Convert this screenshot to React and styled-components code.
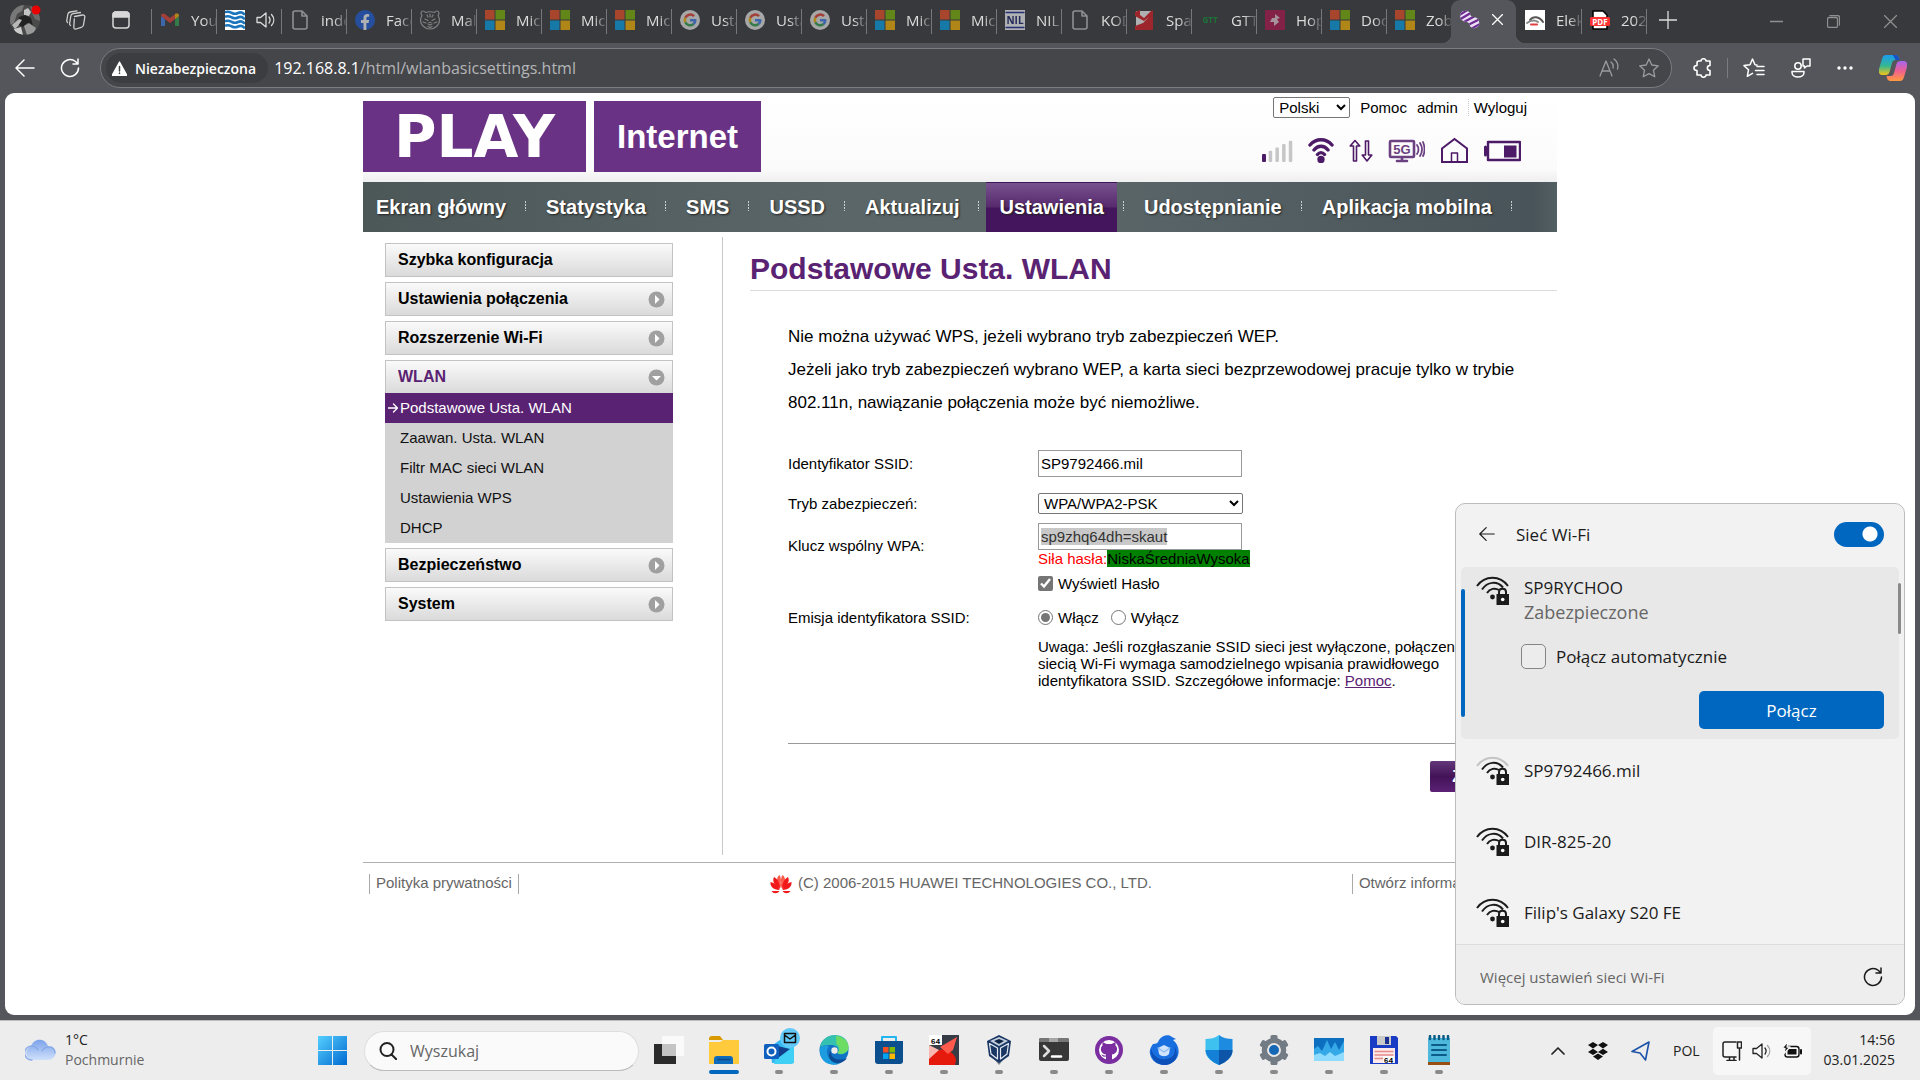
import React, { useEffect, useRef } from "react";
import styled, { createGlobalStyle, css } from "styled-components";

const UI = `"Open Sans", "Noto Sans", sans-serif`;
const WEB = `"Liberation Sans", Arial, sans-serif`;
const PURPLE = "#5a2272";
const ACCENT = "#0067c0";

const Global = createGlobalStyle`
  *, *::before, *::after { box-sizing: border-box; }
  body { margin: 0; background: #55565b; font-family: ${WEB}; font-size: 15px; color: #000; }
  button { font: inherit; color: inherit; border: 0; padding: 0; background: none; }
  svg { display: block; flex: none; }
`;

/* ---------- shell ---------- */
const Desktop = styled.div`
  display: flex;
  flex-direction: column;
  min-height: 100vh;
  overflow: hidden;
`;
const Browser = styled.div`
  flex: 1;
  display: flex;
  flex-direction: column;
  background: #55565b;
  font-family: ${UI};
`;
const TabStrip = styled.div`
  display: flex;
  align-items: flex-start;
  height: 43px;
  background: #38393c;
  color: #dcdcdc;
`;
const StripTools = styled.div`
  display: flex;
  flex: none;
  align-items: center;
  gap: 26px;
  width: 151px;
  height: 40px;
  padding-left: 10px;
`;
const Tab = styled.button`
  display: flex;
  flex: none;
  align-items: center;
  gap: 11px;
  width: 65px;
  height: 25px;
  margin-top: 9px;
  padding: 0 0 4px 8px;
  border-left: 1px solid ${(p) => (p.$plain ? "transparent" : "#76777a")};
  overflow: hidden;
`;
const TabText = styled.span`
  flex: 1;
  min-width: 0;
  overflow: hidden;
  white-space: nowrap;
  text-align: left;
  font-size: 15px;
  line-height: 20px;
  mask-image: linear-gradient(90deg, #000 50%, transparent 110%);
`;
const Favicon = styled.span`
  flex: none;
  width: 20px;
  height: 20px;
  opacity: ${(p) => (p.$asleep ? 0.6 : 1)};
`;
const ActiveTab = styled.button`
  position: relative;
  display: flex;
  flex: none;
  align-items: center;
  gap: 12px;
  width: 65px;
  height: 43px;
  padding: 0 0 4px 9px;
  border-radius: 9px 9px 0 0;
  background: #55565b;
  &::before, &::after {
    content: "";
    position: absolute;
    bottom: 0;
    width: 9px;
    height: 9px;
  }
  &::before { left: -9px; background: radial-gradient(circle at 0 0, #38393c 9px, #55565b 9px); }
  &::after { right: -9px; background: radial-gradient(circle at 9px 0, #38393c 9px, #55565b 9px); }
`;
const NewTab = styled.button`
  height: 25px;
  margin-top: 9px;
  padding: 0 0 4px 12px;
  border-left: 1px solid #76777a;
`;
const WindowButtons = styled.div`
  display: flex;
  gap: 44px;
  margin-left: auto;
  padding: 15px 23px 0 0;
`;
const Toolbar = styled.div`
  display: flex;
  align-items: center;
  height: 50px;
  padding: 0 13px 0 15px;
  color: #fff;
`;
const NavButtons = styled.div`
  display: flex;
  gap: 25px;
  width: 85px;
`;
const Omnibox = styled.div`
  display: flex;
  flex: 1;
  align-items: center;
  height: 40px;
  padding: 0 12px 0 5px;
  border: 1px solid #7b7c80;
  border-radius: 20px;
  background: #45464a;
`;
const SecurityChip = styled.button`
  display: flex;
  align-items: center;
  gap: 8px;
  height: 30px;
  padding: 0 12px 0 6px;
  border-radius: 15px;
  background: #3c3d41;
  font-size: 14px;
  font-weight: 600;
`;
const Address = styled.div`
  flex: 1;
  margin-left: 6px;
  font-size: 16px;
  color: #b4b5b7;
  & b { font-weight: 400; color: #fff; }
`;
const OmniActions = styled.div`
  display: flex;
  gap: 20px;
  color: #9b9c9f;
`;
const ToolActions = styled.div`
  display: flex;
  align-items: center;
  gap: 26px;
  padding-left: 21px;
`;
const ToolDivider = styled.span`
  width: 1px;
  height: 20px;
  margin: 0 -11px;
  background: #7b7c80;
`;
const Viewport = styled.main`
  flex: 1;
  margin: 0 5px 5px;
  border-radius: 9px;
  background: #fff;
  font-family: ${WEB};
`;

/* ---------- router page ---------- */
const Page = styled.div`
  max-width: 1194px;
  margin: 0 auto;
`;
const Header = styled.header`
  display: flex;
  justify-content: space-between;
  height: 89px;
  padding-right: 30px;
  background: linear-gradient(#fff, #fbfbfb 85%, #efefef);
`;
const Brand = styled.div`
  display: flex;
  gap: 8px;
  padding-top: 8px;
`;
const BrandBox = styled.div`
  display: flex;
  align-items: center;
  justify-content: center;
  width: ${(p) => (p.$wide ? 223 : 167)}px;
  height: 71px;
  background: #6a3285;
  color: #fff;
  font: ${(p) => (p.$wide ? `700 58px "DejaVu Sans", sans-serif` : `700 33px ${WEB}`)};
`;
const HeaderSide = styled.div`
  display: flex;
  flex-direction: column;
  align-items: flex-end;
  gap: 19px;
  padding-top: 4px;
`;
const UserLinks = styled.div`
  display: flex;
  align-items: center;
  gap: 10px;
  height: 21px;
  & a { color: #000; text-decoration: none; }
  & a:last-child { padding-left: 5px; border-left: 1px dotted #ccc; }
`;
const Select = styled.select`
  width: ${(p) => p.$width}px;
  height: 21px;
  padding: 0 0 0 1px;
  border: 1px solid #767676;
  border-radius: 2px;
  background: #fff;
  color: #000;
  font: 15px ${WEB};
`;
const StatusIcons = styled.div`
  display: flex;
  align-items: center;
  gap: 15px;
  padding-right: 6px;
`;
const MainNav = styled.nav`
  display: flex;
  height: 50px;
  background: linear-gradient(90deg, #4c5758, #5a6668 40%, #5a6668 60%, #49545a 98%, #536061);
`;
const NavLink = styled.a`
  display: flex;
  align-items: center;
  padding: 0 13px;
  color: #fff;
  font-size: 20px;
  font-weight: 700;
  text-decoration: none;
  text-shadow: 1px 1px 2px #222;
  ${(p) => p.$active && css`
    background: linear-gradient(#79548f, #57296d 50%, #44155c 52%, #44155c);
    box-shadow: inset 0 1px #3f1458;
  `}
`;
const NavDots = styled.span`
  width: 14px;
  height: 10px;
  margin-top: 19px;
  padding-left: 6px;
  &::before {
    content: "";
    display: block;
    width: 1px;
    height: 10px;
    background: repeating-linear-gradient(#c8cdcd 0 2px, transparent 2px 3px);
  }
`;
const Columns = styled.div`
  display: flex;
  min-height: 618px;
  margin-top: 5px;
`;
const Sidebar = styled.aside`
  flex: none;
  width: 360px;
  padding: 6px 49px 0 22px;
  border-right: 1px solid #c8c8c8;
`;
const Menu = styled.ul`
  display: flex;
  flex-direction: column;
  gap: 5px;
  margin: 0;
  padding: 0;
  list-style: none;
`;
const MenuLink = styled.a`
  display: flex;
  align-items: center;
  justify-content: space-between;
  height: 34px;
  padding: 0 7px 0 12px;
  border: 1px solid #c3c3c3;
  background: linear-gradient(#fafafa, #dadada);
  color: ${(p) => (p.$open ? PURPLE : "#000")};
  font-size: 16px;
  font-weight: 700;
  text-decoration: none;
`;
const SubMenu = styled.ul`
  margin: -1px 0 0;
  padding: 0;
  background: #d2d2d2;
  list-style: none;
`;
const SubLink = styled.a`
  display: flex;
  align-items: center;
  height: 30px;
  padding: 0 0 1px ${(p) => (p.$active ? 3 : 15)}px;
  gap: 2px;
  background: ${(p) => (p.$active ? PURPLE : "none")};
  color: ${(p) => (p.$active ? "#fff" : "#111")};
  text-decoration: none;
`;
const Content = styled.section`
  flex: 1;
  min-width: 0;
  margin-left: 27px;
`;
const Title = styled.h1`
  margin: 0;
  padding: 15px 0 4px;
  border-bottom: 1px solid #ddd;
  color: ${PURPLE};
  font-size: 30px;
  line-height: 34px;
`;
const Body = styled.div`
  padding: 29px 0 0 38px;
`;
const Notice = styled.p`
  margin: 0;
  font-size: 17px;
  line-height: 33px;
`;
const Form = styled.form`
  margin-top: 31px;
  line-height: 17px;
`;
const Row = styled.div`
  display: grid;
  grid-template-columns: 250px 1fr;
  align-items: ${(p) => (p.$top ? "start" : "center")};
  margin-bottom: ${(p) => p.$after}px;
`;
const RowLabel = styled.label`
  padding-top: ${(p) => (p.$drop ? 14 : 0)}px;
`;
const Stack = styled.div`
  display: flex;
  flex-direction: column;
  align-items: flex-start;
`;
const Choices = styled.div`
  display: flex;
  gap: 12px;
`;
const TextBox = styled.input`
  display: block;
  width: 204px;
  height: 27px;
  padding: 0 2px;
  border: 1px solid #999;
  border-radius: 0;
  outline: 0;
  font: 15px/25px ${WEB};
  &::selection { background: #c8c8c8; color: #333; }
`;
const Strength = styled.div`
  color: red;
  & span { display: inline-block; background: green; color: #000; }
`;
const Choice = styled.label`
  display: flex;
  align-items: center;
  gap: 5px;
  height: 17px;
  margin-top: ${(p) => (p.$drop ? 8 : 0)}px;
`;
const Tick = styled.input`
  width: 15px;
  height: 15px;
  margin: 0;
  accent-color: #757575;
`;
const Hint = styled.p`
  width: 450px;
  margin: 12px 0 0 250px;
  & a { color: ${PURPLE}; }
`;
const Actions = styled.div`
  display: flex;
  justify-content: flex-end;
  margin-top: 54px;
  padding: 17px 17px 0 0;
  border-top: 1px solid #999;
`;
const Apply = styled.button`
  height: 31px;
  padding: 0 22px;
  border-radius: 2px;
  background: linear-gradient(#64387a, #431358 50%, #5c2175);
  color: #fff;
  font-size: 16px;
  font-weight: 700;
`;
const PageFooter = styled.footer`
  display: grid;
  grid-template-columns: 401px 1fr auto;
  justify-items: start;
  margin-top: 7px;
  padding: 11px 6px 0;
  border-top: 1px solid #b0b0b0;
  color: #666;
  line-height: 18px;
`;
const FootLink = styled.a`
  padding: 0 6px;
  border: solid #aaa;
  border-width: 0 1px;
  color: inherit;
  text-decoration: none;
`;
const Copyright = styled.span`
  display: flex;
  gap: 6px;
`;

/* ---------- Wi-Fi flyout ---------- */
const Flyout = styled.section`
  position: fixed;
  right: 15px;
  bottom: 75px;
  width: 450px;
  border: 1px solid #bcbcbc;
  border-radius: 10px;
  background: #f2f2f2;
  color: #1b1b1b;
  font-family: ${UI};
  font-size: 17px;
  overflow: hidden;
`;
const FlyHead = styled.header`
  display: flex;
  align-items: center;
  gap: 21px;
  height: 62px;
  padding: 0 20px 2px 23px;
  & h2 { flex: 1; margin: 0; font-size: 17px; font-weight: 400; }
`;
const Switch = styled.input`
  appearance: none;
  width: 50px;
  height: 25px;
  margin: 0;
  border-radius: 13px;
  background: radial-gradient(circle at 36px 12px, #fff 7px, ${ACCENT} 8px);
`;
const NetList = styled.div`
  position: relative;
  padding: 1px 5px 0;
`;
const ScrollThumb = styled.span`
  position: absolute;
  top: 17px;
  right: 3px;
  width: 3px;
  height: 51px;
  border-radius: 2px;
  background: #8a8a8a;
`;
const Selected = styled.div`
  display: flex;
  height: 172px;
  border-radius: 5px;
  background: #e8e8e8;
`;
const SelectBar = styled.span`
  width: 4px;
  margin: 22px 11px 22px 0;
  border-radius: 2px;
  background: ${ACCENT};
`;
const SelectedBody = styled.div`
  display: flex;
  flex: 1;
  flex-direction: column;
  padding: 9px 15px 10px 0;
`;
const NetName = styled.div`
  display: flex;
  gap: 15px;
  line-height: 24px;
  & small { display: block; color: #666; font-size: 18px; }
`;
const Auto = styled.label`
  display: flex;
  align-items: center;
  gap: 10px;
  height: 25px;
  margin: 20px 0 0 45px;
`;
const AutoBox = styled.input`
  appearance: none;
  width: 25px;
  height: 25px;
  margin: 0;
  border: 1px solid #858585;
  border-radius: 5px;
  background: #ececec;
`;
const Connect = styled.button`
  align-self: flex-end;
  width: 185px;
  height: 38px;
  margin-top: auto;
  border-radius: 5px;
  background: ${ACCENT};
  color: #fff;
`;
const Network = styled.button`
  display: flex;
  align-items: center;
  gap: 15px;
  width: 100%;
  height: 71px;
  padding: 0 0 8px 15px;
`;
const FlyFoot = styled.footer`
  display: flex;
  align-items: center;
  justify-content: space-between;
  height: 60px;
  margin-top: -8px;
  position: relative;
  padding: 4px 21px 0 24px;
  border-top: 1px solid #dcdcdc;
  background: #eee;
  & a { color: #666; font-size: 15px; text-decoration: none; }
`;

/* ---------- taskbar ---------- */
const Taskbar = styled.footer`
  display: flex;
  align-items: center;
  height: 60px;
  padding: 0 25px;
  border-top: 1px solid #bbb;
  background: #ededed;
  color: #222;
  font-family: ${UI};
  font-size: 14px;
  line-height: 20px;
`;
const Weather = styled.button`
  display: flex;
  align-items: center;
  gap: 9px;
  width: 293px;
  padding-bottom: 2px;
  text-align: left;
  & span { display: block; color: #666; }
`;
const SearchBox = styled.label`
  display: flex;
  align-items: center;
  gap: 13px;
  width: 275px;
  height: 40px;
  margin: 0 2px 0 17px;
  padding: 0 14px;
  border: 1px solid #dedede;
  border-bottom-color: #bbb;
  border-radius: 20px;
  background: #fafafa;
  & input {
    width: 200px;
    padding: 0;
    border: 0;
    outline: 0;
    background: none;
    font: 16px ${UI};
  }
  & input::placeholder { color: #666; opacity: 1; }
`;
const Apps = styled.div`
  display: flex;
`;
const AppButton = styled.button`
  display: flex;
  flex-direction: column;
  align-items: center;
  width: 55px;
  height: 60px;
  padding-top: 14px;
  &::after {
    content: "";
    width: ${(p) => (p.$state === "active" ? 30 : 8)}px;
    height: 4px;
    margin-top: 5px;
    border-radius: 2px;
    background: ${(p) => (p.$state === "active" ? ACCENT : p.$state === "idle" ? "transparent" : "#8a8a8a")};
  }
`;
const Tray = styled.div`
  display: flex;
  align-items: center;
  gap: 23px;
  margin-left: auto;
`;
const TrayGroup = styled.button`
  display: flex;
  align-items: center;
  gap: 10px;
  height: 48px;
  margin: 0 -10px;
  padding: 0 9px;
  border-radius: 5px;
  background: #f7f7f7;
`;
const Clock = styled.time`
  padding-bottom: 2px;
  text-align: right;
  & span { display: block; }
`;

/* ---------- drawings ---------- */
const Icon = ({ w = 20, h, vb, children, ...rest }) => (
  <svg width={w} height={h || w} viewBox={vb || `0 0 ${w} ${h || w}`} fill="none" stroke="currentColor" strokeWidth="1.3" strokeLinecap="round" strokeLinejoin="round" aria-hidden="true" {...rest}>
    {children}
  </svg>
);
const F = ({ children }) => <Icon stroke="none">{children}</Icon>;

const favicons = {
  gmail: <F><path d="M1 16V6l4 3v7z" fill="#4285f4" /><path d="M15 9l4-3v10h-4z" fill="#34a853" /><path d="M1 6c0-3 2.500-3 4-2l5 4 5-4c1.500-1 4-1 4 2l-9 7z" fill="#ea4335" /><path d="M15 4c2-1 4-.5 4 2l-4 3z" fill="#fbbc04" /></F>,
  waves: <Icon strokeWidth="2.600" stroke="#1b75bc"><rect width="20" height="20" fill="#fff" stroke="none" />{[4, 8.500, 13, 17.500].map((y) => <path key={y} d={`M1 ${y - 2}c3-1 4 0 6 1s4 1 6 0 4-1 6 1`} />)}</Icon>,
  doc: <Icon stroke="#c8c8c8" strokeWidth="1.600"><path d="M5 1h7l5 5v11a2 2 0 0 1-2 2H5a2 2 0 0 1-2-2V3a2 2 0 0 1 2-2zM12 1v5h5" /></Icon>,
  facebook: <F><circle cx="10" cy="10" r="10" fill="#1a5fe0" /><path d="M8.500 20v-7H6v-3h2.500V8c0-3 1.700-4 4-4l1.700.2v2.600h-1.400c-1.100 0-1.400.7-1.400 1.500V10h2.700l-.5 3h-2.200v7z" fill="#fff" /></F>,
  tiger: <Icon stroke="#b0b0b0" strokeWidth="1.200"><path d="M3 1c-2 0-2.500 3-1 4.500C0 9 0 13 3 16c4 4 10 4 14 0 3-3 3-7 1-10.500C19.500 4 19 1 17 1c-1 0-2 .7-2.500 1.500-3-1-6-1-9 0C5 1.700 4 1 3 1zM5 9l3 1.500M15 9l-3 1.500M8 14l2 1 2-1M10 4v3M7 5l1 2M13 5l-1 2M3 12l3 1M17 12l-3 1M8 16.500l2 1 2-1M9 12.500h2" /></Icon>,
  ms: <F><path fill="#f25022" d="M0 0h9.500v9.500H0z" /><path fill="#7fba00" d="M10.500 0H20v9.500h-9.500z" /><path fill="#00a4ef" d="M0 10.500h9.500V20H0z" /><path fill="#ffb900" d="M10.500 10.500H20V20h-9.500z" /></F>,
  google: <Icon strokeWidth="2.600" strokeLinecap="butt"><circle cx="10" cy="10" r="10" fill="#f1f1f1" stroke="none" /><path d="M14 6.200A5.300 5.300 0 0 0 5.300 7.800" stroke="#ea4335" /><path d="M5.300 7.800a5.300 5.300 0 0 0 0 4.500" stroke="#fbbc05" /><path d="M5.300 12.300A5.300 5.300 0 0 0 13.500 14" stroke="#34a853" /><path d="M13.500 14a5 5 0 0 0 1.800-3.800H10" stroke="#4285f4" /></Icon>,
  nil: <Icon stroke="#1f2a9c"><rect width="20" height="20" fill="#fff" stroke="none" /><path d="M1 2.500h18M1 17.500h18" /><text x="10" y="14" fontSize="10" fontWeight="700" textAnchor="middle" fill="#16206e" stroke="none" fontFamily="Open Sans">NIL</text></Icon>,
  mail: <F><path fill="#fff" d="M1 1h17v18H1z" /><path fill="#e01b22" d="M0 2l5-2v5l4 3 7-7 2-1v20H0v-4l8-3 6-6-5 4-9-5z" /></F>,
  gtt: <F><text x="10" y="13" fontSize="8" fontWeight="700" textAnchor="middle" fill="#0c9a35" fontFamily="Open Sans">GTT</text></F>,
  hop: <F><rect width="20" height="20" rx="1" fill="#b5124f" /><path fill="#fff" d="M10 4l5 4-3 1 2 3-5 4v-4l-4 0 2-4 3 0z" opacity=".8" /></F>,
  swirl: (
    <Icon stroke="none">
      <clipPath id="swirl"><path d="M1 3c2-3 7-3 9 0 0 2 1 4 3 4 5 0 7 4 6 8-2 4-7 4-9 1 0-2-1-3-3-4C1 12-1 7 1 3z" /></clipPath>
      <g clipPath="url(#swirl)"><path d="M0 0h20v20H0z" fill="#ece0f4" /><path d="M-2 6L9-1M-1 10L14 1M2 13L17 5M6 16l14-7M9 20l13-7" stroke="#6d2b93" strokeWidth="2.200" /></g>
    </Icon>
  ),
  elek: <Icon strokeWidth="2"><rect width="20" height="20" fill="#fff" stroke="none" /><path stroke="#555" d="M5 10c3-4 9-4 13 2" /><path stroke="#888" d="M2 13c4-3 8-3 11-1" /><path stroke="#e04040" d="M6 14.500h6" /></Icon>,
  pdf: <F><path fill="#fff" stroke="#000" strokeWidth="1.500" d="M3 1h10l4 4v14H3z" /><rect y="7" width="20" height="9" rx="1.500" fill="#f33" /><text x="10" y="14.500" fontSize="8" fontWeight="700" textAnchor="middle" fill="#fff" fontFamily="Open Sans">PDF</text></F>,
};
const Speaker = ({ soft }) => (
  <Icon><path d="M1 7.500h3.500L10 3v14l-5.500-4.500H1zM13 7c1.300 1.800 1.300 4.200 0 6" /><path d="M15.500 4.500c3 3.300 3 7.700 0 11" opacity={soft ? 0.4 : 1} /></Icon>
);
const Back = ({ w = 20 }) => <Icon w={w} vb="0 0 20 20" strokeWidth="1.500"><path d="M19 10H1M9 2L1 10l8 8" /></Icon>;
const Reload = () => <Icon w={20} strokeWidth="1.500"><path d="M18.500 10A8.500 8.500 0 1 1 15.500 3.500L17 5M18 1v5h-5" /></Icon>;
const WifiLock = ({ weak }) => (
  <Icon w={33} h={29} strokeWidth="2" strokeLinecap="butt">
    <path d="M1 10C9-1 24-1 32 10" stroke={weak ? "#c4c4c4" : undefined} />
    <path d="M6 13.500c5.500-8 15-9 21-2M11 17c3-4.500 8-5.500 12-3" />
    <circle cx="16.500" cy="21" r="2.400" fill="currentColor" stroke="none" />
    <path d="M23 18v-2c0-4.500 7-4.500 7 0v2" />
    <path d="M20.500 18H33v11H20.500z" fill="currentColor" stroke="none" />
    <circle cx="26.700" cy="23.500" r="1.800" fill="#fff" stroke="none" />
  </Icon>
);
const MenuArrow = ({ open }) => (
  <Icon w={17} stroke="none"><circle cx="8.500" cy="8.500" r="8" fill="#a0a0a0" /><path d={open ? "M4 7h9l-4.500 4.500z" : "M7 4v9l4.500-4.500z"} fill="#fff" /></Icon>
);

const tabs = [
  ["gmail", "You", 1], ["waves"], ["doc", "inde", 1], ["facebook", "Face", 1], ["tiger", "Mal", 1],
  ["ms", "Micr", 1], ["ms", "Micr", 1], ["ms", "Micr", 1], ["google", "Usta", 1], ["google", "Usta", 1],
  ["google", "Usta", 1], ["ms", "Micr", 1], ["ms", "Micr", 1], ["nil", "NIL", 1], ["doc", "KOD", 1],
  ["mail", "Spa", 1], ["gtt", "GTT", 1], ["hop", "Hop", 1], ["ms", "Doc", 1], ["ms", "Zob", 1],
];
const BrowserTab = ({ data: [icon, text, asleep], plain }) => (
  <Tab $plain={plain}>
    <Favicon $asleep={asleep}>{favicons[icon]}</Favicon>
    {text ? <TabText>{text}</TabText> : <Speaker />}
  </Tab>
);

const StatusBar = () => (
  <StatusIcons>
    <Icon w={31} h={26} stroke="none"><rect y="17" width="4" height="8" rx="1" fill="#4d1a68" />{[1, 2, 3, 4].map((i) => <rect key={i} x={i * 6.700} y={17 - i * 3.300} width="3.500" height={8 + i * 3.300} rx="1" fill="#c6c6c6" />)}</Icon>
    <Icon w={26} stroke="#4d1a68" strokeWidth="3.400"><path d="M2 8c6-7 16-7 22 0M6 13c4-5 10-5 14 0M9.500 17.500c2-2.500 5-2.500 7 0" /><circle cx="13" cy="22.500" r="2" fill="#4d1a68" /></Icon>
    <Icon w={24} h={26} stroke="#4d1a68" strokeWidth="1.600"><path d="M4.500 24V9H1.200L6 3.500 10.800 9H7.500v15zM16.500 4v14h-3.300l4.800 6 4.800-6h-3.300V4z" /></Icon>
    <Icon w={37} h={26} stroke="#6b4182" strokeWidth="2.600"><rect x="2" y="4" width="24" height="16" rx="1" /><path d="M9 24h10M14 21v3" /><path d="M29 8c2 3 2 6 0 9M32 6c2.500 4 2.500 9 0 13M35 5c2 5 2 10 0 14" strokeWidth="1.800" /><text x="14" y="17" fontSize="13" fontWeight="700" textAnchor="middle" fill="#6b4182" stroke="none" fontFamily="Liberation Sans">5G</text></Icon>
    <Icon w={29} h={26} stroke="#4d1a68" strokeWidth="2"><path d="M2 11.500L14.500 2 27 11.500V25H2z" strokeLinejoin="miter" /><path d="M11.500 25v-9h6v9" strokeWidth="1.500" /></Icon>
    <Icon w={37} h={26} stroke="#4d1a68" strokeWidth="2.400"><rect x="4" y="5" width="32" height="18" /><path d="M1.500 10v8" strokeWidth="3" /><path d="M20 8.500h12.500v12H20z" fill="#4d1a68" stroke="none" /></Icon>
  </StatusIcons>
);

const navItems = ["Ekran główny", "Statystyka", "SMS", "USSD", "Aktualizuj", "Ustawienia", "Udostępnianie", "Aplikacja mobilna"];
const subItems = ["Podstawowe Usta. WLAN", "Zaawan. Usta. WLAN", "Filtr MAC sieci WLAN", "Ustawienia WPS", "DHCP"];
const menuItems = [
  { text: "Szybka konfiguracja" },
  { text: "Ustawienia połączenia", arrow: true },
  { text: "Rozszerzenie Wi-Fi", arrow: true },
  { text: "WLAN", arrow: true, open: true },
  { text: "Bezpieczeństwo", arrow: true },
  { text: "System", arrow: true },
];

const A = (props) => <Icon w={30} {...props} stroke="none" />;
const apps = [
  ["Widok zadań", "idle", <A><path d="M0 9h22v20H0z" fill="#2b2b2b" /><path d="M8 1h22v20H8z" fill="#fafafa" /><path d="M8 9h14v12H8z" fill="#c4c4c4" /></A>],
  ["Eksplorator plików", "active", <A><path d="M0 4q0-3 3-3h8l3 4H0z" fill="#d99a00" /><path d="M0 7h11l3-2h16v24H0z" fill="#ffcb3d" /><path d="M5 29v-5q0-3 3-3h13q3 0 3 3v5z" fill="#0f6cbd" /><path d="M9 24.500h12" stroke="#0a4a86" /></A>],
  ["Outlook", "run", <A overflow="visible"><path d="M6 12L20 2l10 9v17H8z" fill="#35b8f1" /><path d="M15 12l15-2v16q0 3-3 3H10z" fill="#41d0f5" /><path d="M14 11l12 3-12 9z" fill="#123f8c" /><rect y="9" width="15" height="15" rx="1.500" fill="#0f5fbf" /><circle cx="7.500" cy="16.500" r="4" stroke="#fff" strokeWidth="2" /><circle cx="26" cy="3" r="10" fill="#62c8f7" /><path d="M20.500-1.500h11v9h-11zM20.500 0l5.500 4 5.500-4" stroke="#111" strokeWidth="1.500" /></A>],
  ["Edge", "run", <A><circle cx="15" cy="15" r="14.500" fill="#1272c4" /><path d="M1 13C3-4 29-4 29.500 12c0 7-9 9-11 6 3-4-1-8-6-8S3 10 1 13z" fill="#35c1b0" /><path d="M17 1c9 1 13 7 12.500 12-1 6-9 7-11 5 3-4 2-7-1-9z" fill="#6ddc63" /><path d="M10 11c-5 7 0 17 10 18C8 32 0 25 1 14c1-3 5-5 9-3z" fill="#1b9de0" /><path d="M12 16c-1 7 6 11 16 7-5 8-17 6-18-2 0-3 1-4 2-5z" fill="#0c4a94" /><circle cx="15.500" cy="15.500" r="3.200" fill="#ededed" /></A>],
  ["Microsoft Store", "run", <A><path d="M8 7V2h14v5" stroke="#22b5f0" strokeWidth="2" /><path d="M1 6h28v20q0 3-3 3H4q-3 0-3-3z" fill="#0c4f8f" /><path fill="#f25022" d="M9 12h5.500v5.500H9z" /><path fill="#7fba00" d="M15.500 12H21v5.500h-5.500z" /><path fill="#00a4ef" d="M9 18.500h5.500V24H9z" /><path fill="#ffb900" d="M15.500 18.500H21V24h-5.500z" /></A>],
  ["Antena 64", "run", <A><path d="M0 0h30v30H0z" fill="#373b45" /><path d="M0 30V20l10-5c9-2 16 4 17 10l-1 5z" fill="#e51a0c" /><path d="M11 12L28 2l-4 13-5 4z" fill="#ff5a4c" /><path d="M0 10v14l10-9z" fill="#f8b7b0" /><path d="M0 0h13v10H0z" fill="#fff" /><text x="6.500" y="8.500" fontSize="8" fontWeight="700" textAnchor="middle" fill="#000" fontFamily="Liberation Mono">64</text></A>],
  ["VirtualBox", "run", <A><path d="M7 20l8 10 8-10z" fill="#7d8490" /><path d="M15 0l12 6-2 15-10 7-10-7L3 6z" fill="#1a3763" /><path d="M15 2l9 4-9 5-9-5z" fill="#c3cede" /><path d="M15 4l5 2-5 3-5-3z" fill="#0f2444" /><path d="M5.500 8.500l8 4.500v11L7 19zM24.500 8.500l-8 4.500v11l6.500-5z" stroke="#e6ebf3" strokeWidth="1.200" /></A>],
  ["Terminal", "run", <A><rect y="3" width="30" height="23" rx="2" fill="#383838" /><path d="M2 3h8v4H0V5q0-2 2-2z" fill="#777" /><path d="M10 3h9v4h-9z" fill="#a6a6a6" /><path d="M19 3h9q2 0 2 2v2H19z" fill="#777" /><path d="M5 11l5 5-5 5" stroke="#ddd" strokeWidth="2.500" /><path d="M13 21.500h9" stroke="#fff" strokeWidth="2.500" /></A>],
  ["GitHub Desktop", "run", <A><circle cx="15" cy="15" r="14" fill="#7a2ea0" /><circle cx="15" cy="15" r="10" fill="#fff" /><path d="M12 25v-3.500c-3 .6-4-.5-4.500-2 1.500 0 2 1.500 4.500 1v-1c-6-1-6-7-3.500-9V7l4 2h5l4-2v3.500c2.500 2 2.500 8-3.500 9V25z" fill="#7a2ea0" /></A>],
  ["Thunderbird", "run", <A><path d="M4 9c3 0 5-1 6-4 3-5 10-6 13-3l4 2-3 1c8 6 7 18 0 22-9 6-21 2-23-8C0 15 2 12 4 9z" fill="#1a6fe0" /><path d="M2 14c3 9 10 12 19 9 5-2 6-8 4-13 6 10 2 19-9 20C7 30 1 23 2 14z" fill="#0d50b8" /><path d="M9 13l6-3 6 3-1 6c-2.500 3-7.500 3-10 0z" fill="#cfe3fb" /><path d="M9 13l6 4 6-4" stroke="#8db8ee" /></A>],
  ["Zabezpieczenia", "run", <A><path d="M15 0c4 3 9 4 13.500 4v12c0 6-6 11-13.500 14z" fill="#1d8be0" /><path d="M15 0C11 3 6 4 1.500 4v12c0 6 6 11 13.500 14z" fill="#3fc1f0" /><path d="M1.500 15H15v15C8 27 2 22 1.500 15z" fill="#1580d8" /><path d="M15 15h13.500c0 7-6 12-13.500 15z" fill="#0c55a8" /></A>],
  ["Ustawienia", "run", <A><circle cx="15" cy="15" r="9.500" stroke="#737b84" strokeWidth="5.500" />{[0, 60, 120, 180, 240, 300].map((r) => <rect key={r} x="11.500" y="0" width="7" height="7" rx="1.500" fill="#737b84" transform={`rotate(${r} 15 15)`} />)}<circle cx="15" cy="15" r="6.800" fill="#e6e6e6" /><circle cx="15" cy="15" r="5" fill="#1367b5" /></A>],
  ["Monitor", "run", <A><path d="M0 3h30v23H0z" fill="#0d6fc0" /><path d="M0 14l4-3 4 5 5-11 4 9 4-7 4 8 5-9v20H0z" fill="#35a8e8" /><path d="M0 20l6-2 5 3 5-4 5 4 9-4v9H0z" fill="#8fdcff" /></A>],
  ["Kopia 64", "run", <A><path d="M1 1h26l2 2v26H1z" fill="#1a3bc4" /><path d="M8 1h14v9H8z" fill="#c9c9c9" /><path d="M16 2h4v7h-4z" fill="#1a2f90" /><path d="M4 13h22v15H4z" fill="#fde9e9" /><path d="M6 16.500h18M6 20h18M6 23.500h8" stroke="#e58b8b" /><path d="M14 21h11v7H14z" fill="#fff" /><text x="19.500" y="27.500" fontSize="8" fontWeight="700" textAnchor="middle" fill="#000" fontFamily="Liberation Mono">64</text></A>],
  ["Notatnik", "run", <A><path d="M4 3h22v25H4z" fill="#4db8dc" /><path d="M4 27h22v3H4z" fill="#9a4d10" /><path d="M8 10h14M8 15h14M8 20h14" stroke="#0b5c86" strokeWidth="2" /><path d="M6 1v3M10.500 1v3M15 1v3M19.500 1v3M24 1v3" stroke="#0b5c86" strokeWidth="2.500" /></A>],
];

export default function App() {
  const keyRef = useRef(null);
  useEffect(() => {
    keyRef.current.focus({ preventScroll: true });
    keyRef.current.select();
  }, []);

  return (
    <Desktop>
      <Global />
      <Browser>
        <TabStrip>
          <StripTools>
            <Icon w={30} stroke="none" overflow="visible">
              <clipPath id="face"><circle cx="15" cy="15" r="15" /></clipPath>
              <g clipPath="url(#face)"><path d="M0 0h30v30H0z" fill="#4a4a4a" /><path d="M0 0h14l-2 6-5 3-3 9-4 2z" fill="#777" /><path d="M14 5l4-2 3 4-2 4-5-1z" fill="#c4c4c4" /><path d="M9 12l6-2 6 3 2 8-6-3-4 4-6-3z" fill="#222" /><path d="M2 20l7-6 3 1-4 6-3 3z" fill="#b8b8b8" /><path d="M14 21l5-3 7 5-3 7h-6z" fill="#999" /><path d="M4 24l7-2 2 8H6z" fill="#ccc" /><path d="M20 0h10v16l-5-2-3-6z" fill="#6b6b6b" /></g>
              <circle cx="26" cy="5" r="4.500" fill="#e90000" />
            </Icon>
            <Icon stroke="#d0d0d0"><path d="M8.500 6.500l8-1.500c1.500-.2 2.500.6 2.300 2l-1.300 8c-.2 1.400-1 2-2.300 2.300L10 19c-1.500.2-2.300-.5-2.200-2l.5-8M4.500 15.500c-.8-.5-1-1.200-.9-2L4.800 6C5 4.600 5.800 4 7 3.700L14.500 2.500M1.500 12.500c-.6-.5-.8-1-.7-2l1-6C2 3 2.800 2.300 4 2L11 .8" /></Icon>
            <Icon w={18} stroke="#d8d8d8" strokeWidth="1.500"><rect x="1" y="1" width="16" height="16" rx="3" /><path d="M1 4q0-3 3-3h10q3 0 3 3v2H1z" fill="#d8d8d8" /></Icon>
          </StripTools>
          {tabs.map((t, i) => <BrowserTab key={i} data={t} />)}
          <ActiveTab aria-label="Podstawowe Usta. WLAN">
            {favicons.swirl}
            <Icon w={11} stroke="#fff"><path d="M.5.5l10 10M10.500.5l-10 10" /></Icon>
          </ActiveTab>
          <BrowserTab data={["elek", "Elek"]} plain />
          <BrowserTab data={["pdf", "202"]} />
          <NewTab aria-label="Nowa karta"><Icon w={18}><path d="M9 0v18M0 9h18" /></Icon></NewTab>
          <WindowButtons>
            <Icon w={13} stroke="#8e8f91"><path d="M0 6.500h13" /></Icon>
            <Icon w={13} stroke="#8e8f91"><rect x=".5" y="2.500" width="10" height="10" rx="1.500" /><path d="M3 .5h7.500q2 0 2 2V10" /></Icon>
            <Icon w={13} stroke="#8e8f91"><path d="M0 0l13 13M13 0L0 13" /></Icon>
          </WindowButtons>
        </TabStrip>
        <Toolbar>
          <NavButtons><Back /><Reload /></NavButtons>
          <Omnibox>
            <SecurityChip>
              <Icon w={15} stroke="none"><path d="M7.500 1L15 14.500H0z" fill="#fff" stroke="#fff" /><path d="M7.500 5.500v4.500M7.500 12v.5" stroke="#3c3d41" strokeWidth="1.500" /></Icon>
              Niezabezpieczona
            </SecurityChip>
            <Address><b>192.168.8.1</b>/html/wlanbasicsettings.html</Address>
            <OmniActions>
              <Icon><path d="M1 18L7 3l6 15M3 13h8M12 4c2 1.500 2.500 3.500 2 6M15 1c3.500 2.500 4.500 6 3.500 10" /></Icon>
              <Icon><path d="M10 1l2.800 6 6.500.8-4.800 4.500 1.300 6.500L10 15.600l-5.800 3.200 1.300-6.500L.7 7.800 7.200 7z" /></Icon>
            </OmniActions>
          </Omnibox>
          <ToolActions>
            <Icon w={19} h={20} strokeWidth="1.600"><path d="M6 3h2c0-3 5-3 5 0h4v4.500c-3.500 0-3.500 5 0 5V17h-4c0 3-5 3-5 0H4v-4.500C0 12.500 0 7.500 4 7.500V5q0-2 2-2z" /></Icon>
            <ToolDivider />
            <Icon w={22} h={20} strokeWidth="1.500"><path d="M14 7l-2-.2L9.500 1 7 6.800l-6 .8 4.500 4.200-1.200 6.500 5.200-3M14 8.500h7M12.500 12.500H21M14 16.500h7" /></Icon>
            <Icon strokeWidth="1.500"><circle cx="7" cy="8" r="3.200" /><path d="M1 13.500h12v1c0 6-12 6-12 0zM12 1h7v7h-3l-2.500 2V8H12z" /></Icon>
            <Icon w={16} h={4} stroke="none"><circle cx="2" cy="2" r="1.700" fill="#fff" /><circle cx="8" cy="2" r="1.700" fill="#fff" /><circle cx="14" cy="2" r="1.700" fill="#fff" /></Icon>
            <Icon w={28} h={26} stroke="none">
              <defs>
                <linearGradient id="cpa" x2="0" y2="1"><stop stopColor="#1a9cf0" /><stop offset=".55" stopColor="#35b890" /><stop offset="1" stopColor="#f5c518" /></linearGradient>
                <linearGradient id="cpb" x2="0" y2="1"><stop stopColor="#a565f0" /><stop offset=".5" stopColor="#f06090" /><stop offset="1" stopColor="#ff9a3c" /></linearGradient>
              </defs>
              <path d="M7 0h9c3 0 4 2 4.500 5h-4c-2 0-3 1-3.500 3l-2.500 9c-.5 2-2 3-4 3H3c-3 0-3.500-3-3-6L3 4c.7-2.500 2-4 4-4z" fill="url(#cpa)" />
              <path d="M16 0c3 0 4 2 4.500 5h-4c-1-2-1.500-4-3-5z" fill="#1850c8" />
              <path d="M21 26h-9c-3 0-4-2-4.500-5h4c2 0 3-1 3.500-3l2.500-9c.5-2 2-3 4-3H25c3 0 3.500 3 3 6l-3 10c-.7 2.500-2 4-4 4z" fill="url(#cpb)" />
            </Icon>
          </ToolActions>
        </Toolbar>

        <Viewport>
          <Page>
            <Header>
              <Brand>
                <BrandBox $wide>PLAY</BrandBox>
                <BrandBox>Internet</BrandBox>
              </Brand>
              <HeaderSide>
                <UserLinks>
                  <Select $width={77} aria-label="Język"><option>Polski</option></Select>
                  <a href="#pomoc">Pomoc</a>
                  <a href="#admin">admin</a>
                  <a href="#wyloguj">Wyloguj</a>
                </UserLinks>
                <StatusBar />
              </HeaderSide>
            </Header>
            <MainNav>
              {navItems.map((n) => (
                <React.Fragment key={n}>
                  <NavLink href="#nav" $active={n === "Ustawienia"}>{n}</NavLink>
                  <NavDots />
                </React.Fragment>
              ))}
            </MainNav>
            <Columns>
              <Sidebar>
                <Menu>
                  {menuItems.map((m) => (
                    <li key={m.text}>
                      <MenuLink href="#menu" $open={m.open}>{m.text}{m.arrow && <MenuArrow open={m.open} />}</MenuLink>
                      {m.open && (
                        <SubMenu>
                          {subItems.map((s, i) => (
                            <li key={s}>
                              <SubLink href="#sub" $active={i === 0}>
                                {i === 0 && <Icon w={10}><path d="M0 5h9.500M5.500 1l4 4-4 4" /></Icon>}
                                {s}
                              </SubLink>
                            </li>
                          ))}
                        </SubMenu>
                      )}
                    </li>
                  ))}
                </Menu>
              </Sidebar>
              <Content>
                <Title>Podstawowe Usta. WLAN</Title>
                <Body>
                  <Notice>Nie można używać WPS, jeżeli wybrano tryb zabezpieczeń WEP.</Notice>
                  <Notice>Jeżeli jako tryb zabezpieczeń wybrano WEP, a karta sieci bezprzewodowej pracuje tylko w trybie 802.11n, nawiązanie połączenia może być niemożliwe.</Notice>
                  <Form onSubmit={(e) => e.preventDefault()}>
                    <Row $after={16}>
                      <RowLabel htmlFor="ssid">Identyfikator SSID:</RowLabel>
                      <TextBox id="ssid" defaultValue="SP9792466.mil" />
                    </Row>
                    <Row $after={9}>
                      <RowLabel htmlFor="mode">Tryb zabezpieczeń:</RowLabel>
                      <Select id="mode" $width={205}><option>WPA/WPA2-PSK</option></Select>
                    </Row>
                    <Row $top $after={17}>
                      <RowLabel htmlFor="wpa" $drop>Klucz wspólny WPA:</RowLabel>
                      <Stack>
                        <TextBox id="wpa" ref={keyRef} defaultValue="sp9zhq64dh=skaut" />
                        <Strength>Siła hasła:<span>NiskaŚredniaWysoka</span></Strength>
                        <Choice $drop><Tick type="checkbox" defaultChecked />Wyświetl Hasło</Choice>
                      </Stack>
                    </Row>
                    <Row $after={0}>
                      <span>Emisja identyfikatora SSID:</span>
                      <Choices>
                        <Choice><Tick type="radio" name="emisja" defaultChecked />Włącz</Choice>
                        <Choice><Tick type="radio" name="emisja" />Wyłącz</Choice>
                      </Choices>
                    </Row>
                    <Hint>
                      Uwaga: Jeśli rozgłaszanie SSID sieci jest wyłączone, połączenie z siecią Wi-Fi wymaga samodzielnego wpisania prawidłowego identyfikatora SSID. Szczegółowe informacje: <a href="#pomoc">Pomoc</a>.
                    </Hint>
                    <Actions><Apply>Zastosuj</Apply></Actions>
                  </Form>
                </Body>
              </Content>
            </Columns>
            <PageFooter>
              <FootLink href="#prywatnosc">Polityka prywatności</FootLink>
              <Copyright>
                <Icon w={22} h={20} stroke="none">
                  <path d="M10.500 14C6 9 6 3 9.500 1c2 3 2 9 1 13zM11.500 14C16 9 16 3 12.500 1c-2 3-2 9-1 13z" fill="#ff5a4c" />
                  <path d="M10 15C4 11 2 7 4 3c4 2 6 7 6 12zM12 15c6-4 8-8 6-12-4 2-6 7-6 12z" fill="#f01818" />
                  <path d="M9.500 16C3 16 0 12 .5 8c4 1 8 4 9 8zM12.500 16c6.500 0 9.500-4 9-8-4 1-8 4-9 8zM9.500 17c-2 3-6 3-8 0zM12.500 17c2 3 6 3 8 0z" fill="#f01818" />
                </Icon>
                (C) 2006-2015 HUAWEI TECHNOLOGIES CO., LTD.
              </Copyright>
              <FootLink href="#zrodla">Otwórz informacje źródłowe</FootLink>
            </PageFooter>
          </Page>
        </Viewport>
      </Browser>

      <Taskbar>
        <Weather>
          <Icon w={31} h={22} stroke="none">
            <defs><linearGradient id="cloud" x2="0" y2="1"><stop stopColor="#7ba2ea" /><stop offset="1" stopColor="#cfe0fb" /></linearGradient></defs>
            <path d="M7 21a7 7 0 0 1-1-13.500C8-1 20-2 23 7c10-1 10 14 0 14z" fill="url(#cloud)" />
            <path d="M7 21a7 7 0 1 1 6-10" stroke="#88a9e8" /><path d="M17 12c3-6 13-5 13 2" stroke="#88a9e8" />
          </Icon>
          <div>1°C<span>Pochmurnie</span></div>
        </Weather>
        <button aria-label="Start">
          <Icon w={29} stroke="none"><defs><linearGradient id="win" x2="1" y2="1"><stop stopColor="#55d0ff" /><stop offset="1" stopColor="#0069d0" /></linearGradient></defs><path d="M0 0h14v14H0zM15 0h14v14H15zM0 15h14v14H0zM15 15h14v14H15z" fill="url(#win)" /></Icon>
        </button>
        <SearchBox>
          <Icon w={18} strokeWidth="2"><circle cx="8" cy="7.500" r="6.500" /><path d="M12.500 12.500l5 5" /></Icon>
          <input type="text" placeholder="Wyszukaj" aria-label="Wyszukaj" />
        </SearchBox>
        <Apps>
          {apps.map(([name, state, icon]) => <AppButton key={name} aria-label={name} $state={state}>{icon}</AppButton>)}
        </Apps>
        <Tray>
          <Icon w={14} h={9} strokeWidth="1.700"><path d="M1 8l6-6 6 6" /></Icon>
          <Icon w={20} h={18} stroke="none"><path fill="#111" d="M5 0l5 3-5 3.500L0 3zM15 0l5 3-5 3.500L10 3zM5 6.700l5 3.300-5 3-5-3zM15 6.700l5 3.300-5 3-5-3zM10 11.500l5 3-5 3.500-5-3.500z" /></Icon>
          <Icon w={19} h={20} stroke="#1c53a8" strokeWidth="1.600"><path d="M18 1L1 10.500l8 1.500 5.500 7z" /></Icon>
          <span>POL</span>
          <TrayGroup aria-label="Sieć, głośność, bateria">
            <Icon strokeWidth="1.500"><path d="M14 1H3Q1 1 1 3v11q0 2 2 2h11M5 19.500h9M7.500 16v3M12 16v3M15.500 1h4v6h-4zM17.500 7v12" /></Icon>
            <Speaker soft />
            <Icon stroke="none"><rect x="3" y="5.500" width="14" height="10.500" rx="2.500" stroke="#111" strokeWidth="1.400" /><path d="M5.500 8h9v5.500h-9z" fill="#111" /><path d="M19 9v3.500" stroke="#111" strokeWidth="2" /><path d="M6 0L0 7.500h3L1.500 13 8 6H5z" fill="#111" stroke="#f7f7f7" /></Icon>
          </TrayGroup>
          <Clock><span>14:56</span><span>03.01.2025</span></Clock>
        </Tray>
      </Taskbar>

      <Flyout aria-label="Sieć Wi-Fi">
        <FlyHead>
          <Back w={16} />
          <h2>Sieć Wi-Fi</h2>
          <Switch type="checkbox" role="switch" defaultChecked aria-label="Sieć Wi-Fi" />
        </FlyHead>
        <NetList>
          <Selected>
            <SelectBar />
            <SelectedBody>
              <NetName><WifiLock /><div>SP9RYCHOO<small>Zabezpieczone</small></div></NetName>
              <Auto><AutoBox type="checkbox" />Połącz automatycznie</Auto>
              <Connect>Połącz</Connect>
            </SelectedBody>
          </Selected>
          <Network><WifiLock weak />SP9792466.mil</Network>
          <Network><WifiLock />DIR-825-20</Network>
          <Network><WifiLock />Filip's Galaxy S20 FE</Network>
          <ScrollThumb />
        </NetList>
        <FlyFoot>
          <a href="#wifi">Więcej ustawień sieci Wi-Fi</a>
          <Reload />
        </FlyFoot>
      </Flyout>
    </Desktop>
  );
}
